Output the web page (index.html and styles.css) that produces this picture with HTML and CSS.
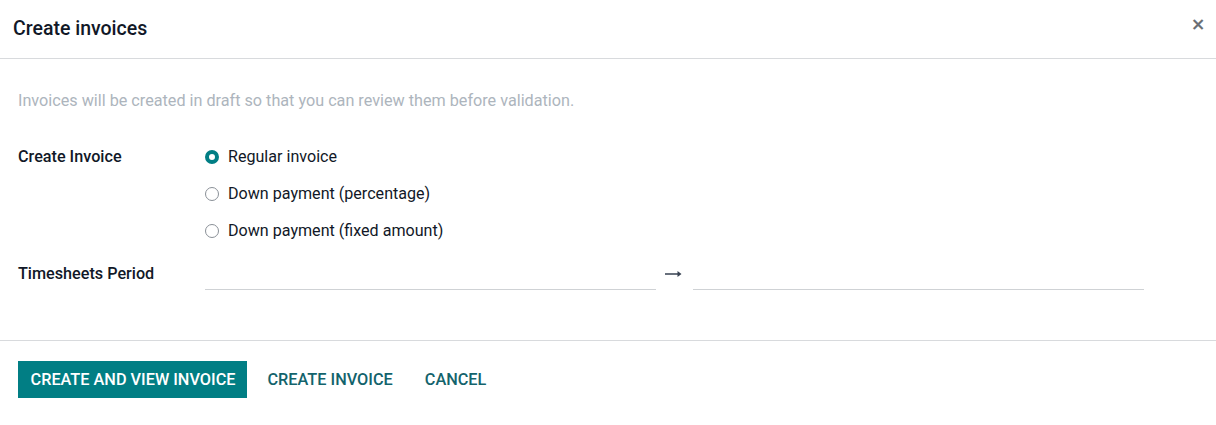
FILE: index.html
```html
<!DOCTYPE html>
<html>
<head>
<meta charset="utf-8">
<link rel="stylesheet" href="styles.css">
</head>
<body>
<div class="modal">
  <header class="modal-header">
    <h4 class="modal-title">Create invoices</h4>
    <button class="close" aria-label="Close">×</button>
  </header>
  <main class="modal-body">
    <p class="hint">Invoices will be created in draft so that you can review them before validation.</p>
    <div class="form">
      <div class="label">Create Invoice</div>
      <div class="radios">
        <label class="radio"><span class="dot checked"></span>Regular invoice</label>
        <label class="radio"><span class="dot"></span>Down payment (percentage)</label>
        <label class="radio"><span class="dot"></span>Down payment (fixed amount)</label>
      </div>
      <div class="label period-label">Timesheets Period</div>
      <div class="daterange">
        <div class="input"></div>
        <svg class="arrow" width="17" height="8" viewBox="0 0 17 8"><path d="M0 3.2h12.5V1L16.5 4 12.5 7V4.8H0z" fill="#374151"/></svg>
        <div class="input"></div>
      </div>
    </div>
  </main>
  <footer class="modal-footer">
    <button class="btn primary">CREATE AND VIEW INVOICE</button>
    <button class="btn link">CREATE INVOICE</button>
    <button class="btn link">CANCEL</button>
  </footer>
</div>
</body>
</html>
```
FILE: styles.css
```css
* { box-sizing: border-box; }
html, body { margin: 0; padding: 0; background: #fff; }
body { font-family: Roboto, "Noto Sans", sans-serif; color: #212529; font-size: 16px; }
.modal { width: 1216px; }
.modal-header {
  height: 59px;
  display: flex;
  align-items: center;
  justify-content: space-between;
  padding: 0 9px 0 13px;
  border-bottom: 1px solid #d8dadd;
}
.modal-title { margin: 0; font-size: 19.5px; font-weight: 500; color: #111827; padding-bottom: 2px; }
.close {
  border: 0; background: none; padding: 0; margin: 0;
  font-size: 22px; line-height: 1; color: #6b6f75; font-weight: 700;
  font-family: "DejaVu Sans", sans-serif; transform: scale(0.8, 0.8);
  margin-top: -10px;
}
.modal-body { padding: 32px 18px 33px 18px; border-bottom: 1px solid #d8dadd; height: 282px; }
.hint { margin: 0 0 31px 0; color: #adb5bd; font-size: 16.2px; line-height: 19px; font-weight: 400; }
.form {
  display: grid;
  grid-template-columns: 187px 939px;
  row-gap: 4px;
}
.label { font-weight: 500; color: #111827; font-size: 16.2px; line-height: 19px; padding-top: 6px; }
.radios { display: flex; flex-direction: column; gap: 16px; padding-top: 5px; }
.radio { display: flex; align-items: center; font-size: 16.1px; line-height: 21px; color: #111827; }
.dot {
  width: 14px; height: 14px; border-radius: 50%;
  border: 1px solid #8a9097; margin-right: 9px; flex: none; background: #fff;
}
.dot.checked { border: 4px solid #017e84; background: #fff; }
.period-label { padding-top: 19px; }
.daterange { display: flex; align-items: center; height: 38px; margin-top: 7px; }
.input { width: 451px; height: 37px; border-bottom: 1px solid #cfd2d5; }
.arrow { margin: 0 11px 0 9px; position: relative; top: 3px; }
.modal-footer { display: flex; align-items: center; padding: 20px 18px; gap: 0; }
.btn {
  font-family: Roboto, sans-serif; font-size: 16.3px; font-weight: 500; border: 0;
  height: 37px; padding: 0 12px; cursor: pointer; letter-spacing: 0;
}
.btn.primary { background: #017e84; color: #fff; padding: 0 12px 0 12.5px; margin-right: 8px; }
.btn.link { background: none; color: #13636c; padding: 0 12px; margin-right: 8px; }
```
